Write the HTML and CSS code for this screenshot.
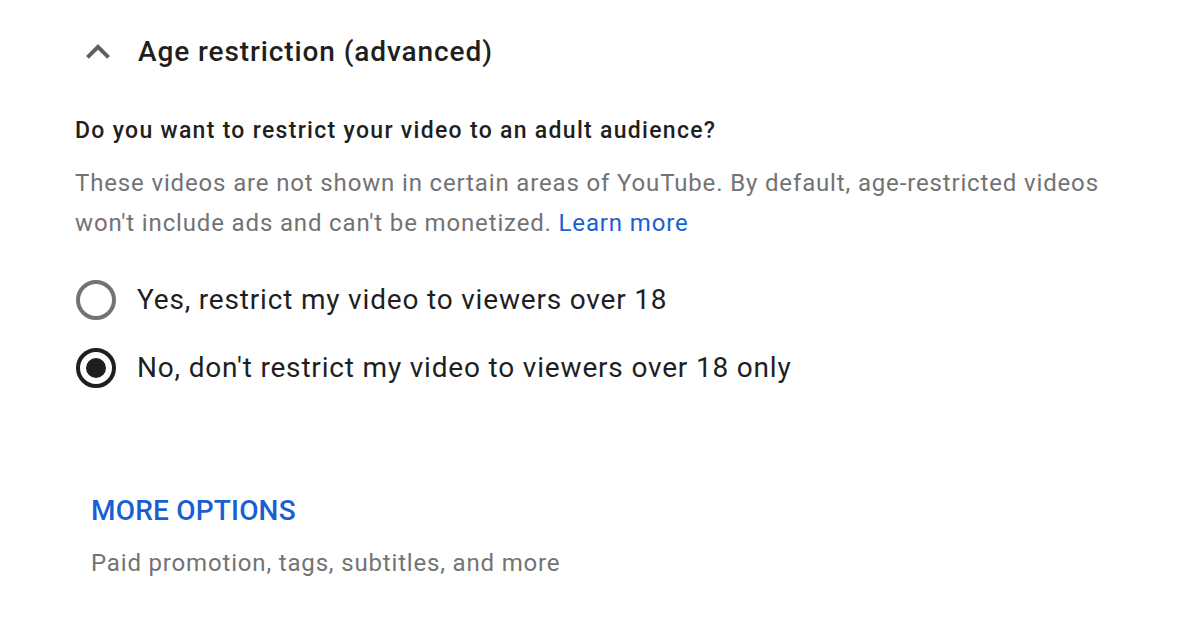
FILE: index.html
```html
<!DOCTYPE html>
<html lang="en">
<head>
<meta charset="utf-8">
<title>Age restriction</title>
<link rel="stylesheet" href="styles.css">
</head>
<body>
<section class="panel">
  <div class="section-header">
    <span class="chevron">
      <svg viewBox="0 0 24 24" width="48" height="48"><path d="M12 8l-6 6 1.41 1.41L12 10.83l4.59 4.58L18 14z" fill="#606060"/></svg>
    </span>
    <h2 class="section-title">Age restriction (advanced)</h2>
  </div>
  <div class="content">
    <h3 class="question">Do you want to restrict your video to an adult audience?</h3>
    <p class="description">These videos are not shown in certain areas of YouTube. By default, age-restricted videos won't include ads and can't be monetized. <a class="link" href="#">Learn more</a></p>
    <div class="radio-group">
      <label class="radio-row">
        <span class="radio"></span>
        <span class="radio-label">Yes, restrict my video to viewers over 18</span>
      </label>
      <label class="radio-row">
        <span class="radio checked"></span>
        <span class="radio-label">No, don't restrict my video to viewers over 18 only</span>
      </label>
    </div>
  </div>
  <div class="more">
    <div class="more-button">MORE OPTIONS</div>
    <div class="more-sub">Paid promotion, tags, subtitles, and more</div>
  </div>
</section>
</body>
</html>
```
FILE: styles.css
```css
html, body {
  margin: 0;
  padding: 0;
  background: #ffffff;
}
body {
  font-family: Roboto, "Liberation Sans", Arial, sans-serif;
  color: #1f1f1f;
}
.panel {
  padding-top: 28px;
}
.section-header {
  display: flex;
  align-items: center;
  padding-left: 74px;
  height: 48px;
  gap: 16px;
}
.chevron {
  width: 48px;
  height: 48px;
  display: flex;
}
.section-title {
  margin: 0;
  font-size: 28px;
  font-weight: 500;
  line-height: 48px;
  letter-spacing: 0.9px;
  color: #1f1f1f;
}
.content {
  padding-left: 75px;
}
.question {
  margin: 39px 0 0;
  font-size: 23px;
  line-height: 32px;
  font-weight: 500;
  letter-spacing: 1.3px;
  color: #1f1f1f;
}
.description {
  margin: 16px 0 0;
  font-size: 24px;
  line-height: 40px;
  letter-spacing: 0.85px;
  color: #737373;
  max-width: 1050px;
}
.link {
  color: #1a5fd2;
  text-decoration: none;
}
.radio-group {
  margin-top: 33px;
  display: flex;
  flex-direction: column;
  gap: 20px;
}
.radio-row {
  display: flex;
  align-items: center;
  height: 48px;
  gap: 21px;
  margin-left: 1px;
}
.radio {
  width: 40px;
  height: 40px;
  box-sizing: border-box;
  border: 4px solid #737373;
  border-radius: 50%;
  display: flex;
  align-items: center;
  justify-content: center;
}
.radio.checked {
  border-color: #1f1f1f;
}
.radio.checked::after {
  content: "";
  width: 20px;
  height: 20px;
  border-radius: 50%;
  background: #1f1f1f;
}
.radio-label {
  font-size: 28px;
  line-height: 48px;
  letter-spacing: 0.82px;
  color: #1f1f1f;
}
.more {
  padding-left: 91px;
  margin-top: 99px;
}
.more-button {
  font-size: 28px;
  font-weight: 500;
  line-height: 40px;
  color: #1a5fd2;
  letter-spacing: 0.2px;
}
.more-sub {
  margin-top: 12px;
  font-size: 24px;
  line-height: 40px;
  letter-spacing: 0.83px;
  color: #737373;
}
```
